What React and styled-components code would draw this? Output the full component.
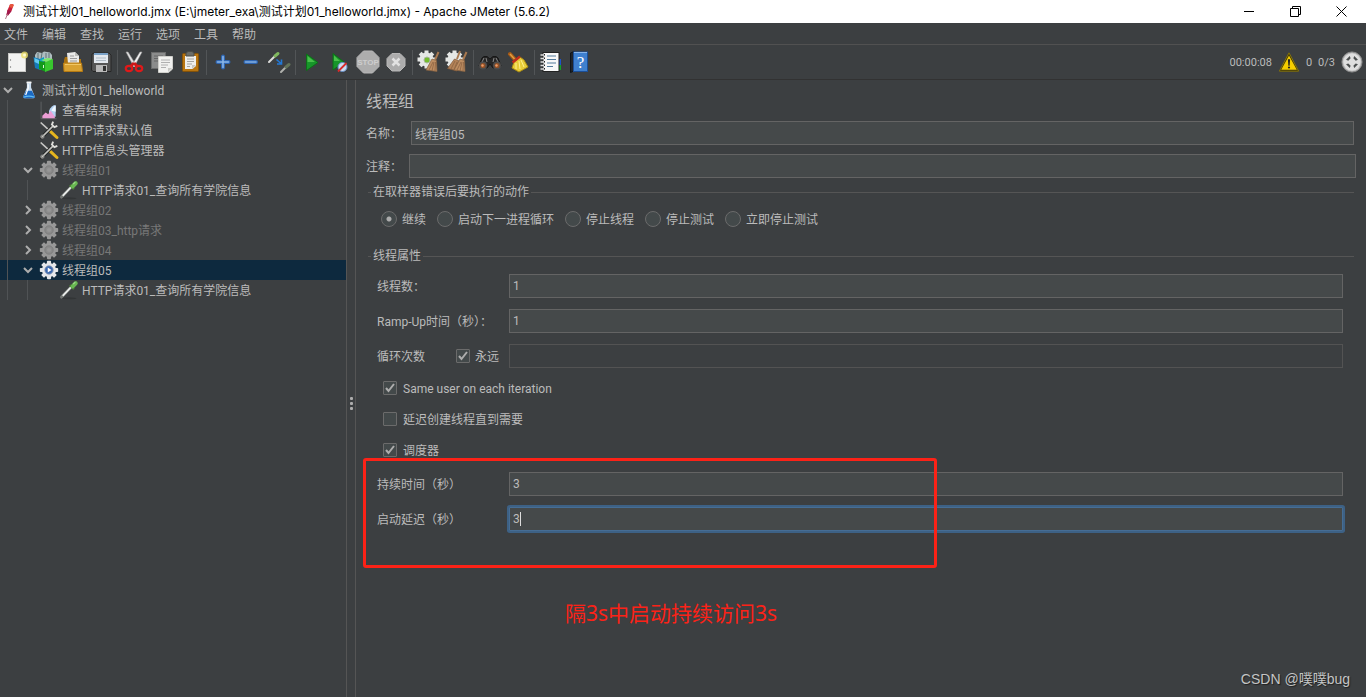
import React, { useState } from 'react';
import styled, { createGlobalStyle, css } from 'styled-components';

const GlobalStyle = createGlobalStyle`
  * {
    box-sizing: border-box;
  }

  body {
    margin: 0;
    background: #3c3f41;
    color: #bbbbbb;
    font-family: Roboto, 'Noto Sans CJK SC', sans-serif;
    font-size: 12px;
    line-height: 16px;
  }

  button, input {
    font: inherit;
    color: inherit;
  }
`;

// Window frame
const Window = styled.div`
  display: flex;
  flex-direction: column;
  min-height: 100vh;
`;

const TitleBar = styled.header`
  display: flex;
  align-items: center;
  height: 23px;
  padding: 0 2px;
  background: #ffffff;
  color: #000000;
`;

const WindowTitle = styled.h1`
  flex: 1;
  margin: 0 0 0 5px;
  font-family: Inter, 'Noto Sans CJK SC', sans-serif;
  font-size: 12px;
  font-weight: 400;
  white-space: nowrap;
`;

const WindowButton = styled.button`
  display: flex;
  align-items: center;
  justify-content: center;
  width: 46px;
  height: 21px;
  padding: 0;
  border: 0;
  background: none;
`;

const MenuBar = styled.nav`
  display: flex;
  gap: 14px;
  height: 22px;
  padding: 4px 4px 0;
  border-bottom: 1px solid #515151;
`;

const MenuButton = styled.button`
  height: 16px;
  padding: 0;
  border: 0;
  background: none;
`;

const ToolBar = styled.div`
  display: flex;
  align-items: center;
  height: 35px;
  padding: 0 3px;
  border-bottom: 1px solid #323232;
`;

const ToolButton = styled.button`
  display: flex;
  align-items: center;
  justify-content: center;
  width: 28px;
  height: 28px;
  padding: 0;
  border: 0;
  background: none;
`;

const Separator = styled.span`
  width: 1px;
  height: 25px;
  margin: 0 2px;
  background: #525557;
`;

const Status = styled.div`
  display: flex;
  align-items: center;
  gap: 6px;
  margin-left: auto;
  font-size: 11px;
`;

const Body = styled.div`
  display: flex;
  flex: 1;
`;

// Text sits slightly low beside its icon or box
const Text = styled.span`
  padding-top: 2px;
`;

// Tree
const Tree = styled.ul`
  flex: none;
  width: 346px;
  margin: 0;
  padding: 0;
  list-style: none;
`;

const TreeRow = styled.li`
  display: flex;
  align-items: center;
  height: 20px;
  white-space: nowrap;
  color: ${props => (props.$disabled ? '#777777' : '#bbbbbb')};
  background: ${props => (props.$selected ? '#0d293e' : 'transparent')};
`;

const Guide = styled.span`
  flex: none;
  align-self: stretch;
  width: 13px;
  margin-left: 7px;
  border-left: 1px solid #505355;
`;

const Toggle = styled.button`
  display: flex;
  align-items: center;
  justify-content: center;
  width: 16px;
  height: 20px;
  padding: 0;
  border: 0;
  background: none;
`;

const ToggleSpace = styled.span`
  width: 16px;
`;

const NodeIcon = styled.span`
  display: flex;
  margin: 0 3px;
`;

const Splitter = styled.div`
  display: flex;
  flex: none;
  flex-direction: column;
  align-items: center;
  justify-content: center;
  gap: 2px;
  width: 10px;
  padding-top: 30px;
  border-left: 1px solid #555555;
  border-right: 1px solid #555555;
`;

const Dot = styled.span`
  width: 3px;
  height: 3px;
  border-radius: 1px;
  background: #adadad;
`;

// Thread group form
const Panel = styled.main`
  position: relative;
  flex: 1;
  padding: 10px 10px 0;
`;

const PanelTitle = styled.h2`
  margin: 0 0 7px;
  font-size: 16px;
  font-weight: 400;
  line-height: 24px;
`;

const Label = styled.label`
  padding-top: 2px;
`;

const FieldRow = styled.div`
  display: flex;
  align-items: center;
  gap: 7px;
  margin-bottom: 9px;
`;

const Input = styled.input`
  flex: 1;
  min-width: 0;
  width: 100%;
  height: 24px;
  margin: 0 ${props => (props.$inset ? '2px' : '0')};
  padding: 0 3px;
  border: 1px solid #646464;
  border-radius: 0;
  outline: none;
  background: #45494a;

  &:disabled {
    border-color: #535353;
    background: #3c3f41;
  }

  ${props => props.$active && css`
    border-color: #466d94;
    box-shadow: 0 0 0 2px #3d6185;
    border-radius: 1px;
  `}
`;

const Group = styled.fieldset`
  min-width: 0;
  margin: ${props => (props.$first ? '-3px' : '20px')} 2px 0;
  padding: 0 11px 0 3px;
  border: 0;
  border-top: 1px solid #555555;
`;

const Legend = styled.legend`
  padding: 0 2px;
`;

const Radios = styled.div`
  display: flex;
  flex-wrap: wrap;
  gap: 11px;
  padding: 10px 0 0 10px;
`;

const ChoiceLabel = styled.label`
  display: flex;
  align-items: center;
  gap: ${props => (props.$wide ? '6px' : '5px')};
`;

const Radio = styled.input`
  appearance: none;
  width: 16px;
  height: 16px;
  margin: 0;
  border: 1px solid #6b6b6b;
  border-radius: 50%;
  background: #43494a;

  &:checked {
    background: radial-gradient(circle, #adadad 0 2px, #43494a 3px);
  }
`;

const CheckWrap = styled.span`
  display: grid;
`;

const CheckInput = styled.input`
  grid-area: 1 / 1;
  appearance: none;
  width: 14px;
  height: 14px;
  margin: 0;
  border: 1px solid #6b6b6b;
  border-radius: 1px;
  background: #43494a;
`;

const CheckMark = styled.svg`
  grid-area: 1 / 1;
  pointer-events: none;
`;

const Properties = styled.div`
  display: flex;
  flex-direction: column;
  gap: 11px;
  padding: 10px 0 0 6px;
`;

const PropertyRow = styled.div`
  display: flex;
  align-items: center;
`;

const LabelCell = styled.div`
  display: flex;
  flex: none;
  align-items: center;
  justify-content: space-between;
  width: 132px;
  padding-right: 10px;
  white-space: nowrap;
`;

const CheckRow = styled.div`
  display: flex;
  height: 20px;
  padding: 0 0 2px 6px;
`;

const InputWrap = styled.div`
  position: relative;
  display: flex;
  flex: 1;
`;

const Caret = styled.span`
  position: absolute;
  top: 5px;
  left: 11px;
  width: 1px;
  height: 14px;
  background: #dddddd;
`;

// Marks lying over the form
const RedFrame = styled.div`
  position: absolute;
  top: 378px;
  left: 7px;
  width: 574px;
  height: 110px;
  border: 3px solid #fc2217;
  border-radius: 3px;
  pointer-events: none;
`;

const RedNote = styled.p`
  position: absolute;
  top: 518px;
  left: 209px;
  margin: 0;
  color: #fc2217;
  font-family: 'Noto Sans', 'Noto Sans CJK SC', sans-serif;
  font-size: 21px;
  line-height: 30px;
  white-space: nowrap;
`;

const Watermark = styled.div`
  position: absolute;
  right: 16px;
  bottom: 8px;
  color: #c4c5c5;
  font-family: 'Liberation Sans', 'Noto Sans CJK SC', sans-serif;
  font-size: 14px;
  line-height: 20px;
  text-shadow: 1px 1px 1px #202020;
`;

// Icons
const Svg = ({ size = 24, children }) => (
  <svg width={size} height={size} viewBox="0 0 24 24" fill="none" aria-hidden="true">
    {children}
  </svg>
);

const FeatherIcon = () => (
  <svg width="16" height="18" viewBox="0 0 16 18" fill="none" aria-hidden="true">
    <path d="M8 1.500C10 .500 12 .800 11.500 2.500L9.500 8L6 12.500L4.500 12L5.500 7Z" fill="#c8203c" />
    <path d="M8 1.500C10 .500 12 .800 11.500 2.500L10.500 5L7 4Z" fill="#e8573b" />
    <path d="M5.500 7L9.500 8L6 12.500L4.500 12Z" fill="#a11a4f" />
    <path d="M5.500 11L3.500 16" stroke="#b0788c" />
  </svg>
);

const NewIcon = () => (
  <Svg>
    <rect x="3.500" y="3.500" width="17" height="18" fill="#f3f3f2" stroke="#c9c9c6" />
    <circle cx="5.500" cy="10" r=".7" fill="#777" />
    <circle cx="5.500" cy="17" r=".7" fill="#777" />
    <circle cx="19.500" cy="5" r="3.500" fill="#eee06a" opacity=".8" />
    <circle cx="19.500" cy="5" r="1.500" fill="#fffbd0" />
  </Svg>
);

const TemplatesIcon = () => (
  <Svg>
    <path d="M2 5L4 2L9 3L11 1.500L17 2.500L19 5V9H2Z" fill="#aebcc0" />
    <path d="M5 3V9M9 3L8 9M13 3V8M16 3V8" stroke="#5e7277" />
    <path d="M.5 7L7 9V20L2 18Z" fill="#1579b7" />
    <path d="M1.500 8L6 10V14L1.500 12Z" fill="#62c9ee" />
    <path d="M7 9L11 7V20L7 20Z" fill="#0d9dc6" />
    <path d="M6 11L13 12V22L6 19Z" fill="#129a1a" />
    <path d="M12 12L20 9V19L12 22Z" fill="#38c72e" />
    <path d="M8 10L15 8L20 9L13 12Z" fill="#7be96b" />
    <path d="M10.500 15V18" stroke="#d9f5d2" />
  </Svg>
);

const OpenIcon = () => (
  <Svg>
    <path d="M3 10L4 7H9L10 9H20V15H3Z" fill="#a9700e" />
    <path d="M6 3L14 2L18 6V14H7Z" fill="#e9e9e7" />
    <path d="M14 2V6H18" fill="#bdbdb9" />
    <path d="M9 6H13M9 8.500H16M9 11H16" stroke="#999" />
    <path d="M2.500 13H20.500L21.500 21.500H3Z" fill="#d9a232" stroke="#b67a12" />
    <path d="M4 14.500H20" stroke="#f1c765" />
  </Svg>
);

const SaveIcon = () => (
  <Svg>
    <path d="M3 4L5 3H20L22 5V21.500H4L2.500 20Z" fill="#565656" stroke="#262626" />
    <rect x="5" y="3" width="14" height="10" fill="#e3e8ee" />
    <path d="M5 4H19" stroke="#7aa2c8" strokeWidth="2" />
    <path d="M7 8H17M7 10.500H17" stroke="#b0bbc5" />
    <rect x="7" y="15" width="11" height="7" fill="#b9b9b9" />
    <rect x="14" y="16" width="3" height="5" fill="#303030" />
  </Svg>
);

const CutIcon = () => (
  <Svg>
    <path d="M4 2L6 2L14 15L12 17Z" fill="#e3e3e3" stroke="#a0a0a0" strokeWidth=".6" />
    <path d="M20 2L18 2L10 15L12 17Z" fill="#f4f4f4" stroke="#a0a0a0" strokeWidth=".6" />
    <path d="M12 13L9 16M12 13L15 16" stroke="#cc1717" strokeWidth="3" />
    <ellipse cx="7" cy="18.500" rx="3.200" ry="2.600" stroke="#e01919" strokeWidth="2.200" />
    <ellipse cx="17" cy="18.500" rx="3.200" ry="2.600" stroke="#e01919" strokeWidth="2.200" />
  </Svg>
);

const CopyIcon = () => (
  <Svg>
    <rect x="1.500" y="2.500" width="14" height="16" fill="#8b8c8c" stroke="#6b6c6c" />
    <path d="M4 6H13M4 8.500H8M4 11H8" stroke="#666" />
    <path d="M8.500 6.500H22.500V19L18.500 22.500H8.500Z" fill="#f1f1ef" stroke="#d0d0cc" />
    <path d="M11 10H20M11 12.500H20M11 15H18M11 17.500H16" stroke="#b0b0b0" />
    <path d="M22 18H18V22Z" fill="#c8c8c4" />
  </Svg>
);

const PasteIcon = () => (
  <Svg>
    <rect x="4.500" y="3.500" width="16" height="18" rx="1" fill="#b87510" stroke="#83520a" />
    <path d="M7 6H18V16L14.500 19H7Z" fill="#eeeeec" />
    <path d="M9 9H16M9 11.500H16M9 14H14M9 16.500H12" stroke="#a4a4a0" />
    <path d="M8 3L10 1.500H14L16 3V6H8Z" fill="#6b6d69" stroke="#4a4c48" />
    <path d="M18 15H14V19Z" fill="#c7c7c3" />
  </Svg>
);

const PlusIcon = () => (
  <Svg>
    <path d="M12 6.500V17.500M6.500 12H17.500" stroke="#2f65b0" strokeWidth="4" strokeLinecap="round" />
    <path d="M12 6.500V17.500M6.500 12H17.500" stroke="#8ab6e8" strokeWidth="1.600" strokeLinecap="round" />
  </Svg>
);

const MinusIcon = () => (
  <Svg>
    <path d="M6.500 12H17" stroke="#2f65b0" strokeWidth="4" strokeLinecap="round" />
    <path d="M6.500 12H17" stroke="#82afe2" strokeWidth="1.600" strokeLinecap="round" />
  </Svg>
);

const ToggleIcon = () => (
  <Svg>
    <path d="M2 12L8 6" stroke="#dcdcda" strokeWidth="2" strokeLinecap="round" />
    <path d="M8 6L11 3.500" stroke="#80b85f" strokeWidth="3" strokeLinecap="round" />
    <path d="M9.500 9.500L14 13.500M14.500 9.500V14H10" stroke="#2378d4" strokeWidth="1.600" />
    <path d="M14 22L18.500 17.500" stroke="#b0b2ad" strokeWidth="2" strokeLinecap="round" />
    <path d="M19 17L22 14.500" stroke="#63745a" strokeWidth="3" strokeLinecap="round" />
  </Svg>
);

const StartIcon = () => (
  <Svg>
    <path d="M6.500 4V20.500L18 12.500Z" fill="#17952a" stroke="#0d6e17" />
    <path d="M7.500 6V12H15Z" fill="#49c04a" />
  </Svg>
);

const StartNoPauseIcon = () => (
  <Svg>
    <path d="M5 3.500V20L16 12Z" fill="#17952a" stroke="#0d6e17" />
    <path d="M6 5.500V11H12Z" fill="#49c04a" />
    <circle cx="14.500" cy="17" r="4.500" fill="#cbdcf2" stroke="#678fc8" />
    <path d="M10 21.500L18.500 13" stroke="#d92b2b" strokeWidth="1.800" />
  </Svg>
);

const StopIcon = () => (
  <Svg>
    <path d="M7.500 1H16.500L23 7.500V16.500L16.500 23H7.500L1 16.500V7.500Z" fill="#adadad" stroke="#b8b8b8" />
    <text x="12" y="15" textAnchor="middle" fontSize="8" fontWeight="700" fontFamily="Liberation Sans" fill="#cdcdcd">STOP</text>
  </Svg>
);

const ShutdownIcon = () => (
  <Svg>
    <path d="M8 3.500H16L21 8.500V16L16 21H8L3 16V8.500Z" fill="#acacac" stroke="#b8b8b8" strokeLinejoin="round" />
    <path d="M8.500 8.500L15.500 15.500M15.500 8.500L8.500 15.500" stroke="#e2e2e2" strokeWidth="2.500" />
  </Svg>
);

const ClearIcon = ({ all }) => (
  <Svg>
    {[0, 45, 90, 135].map(a => (
      <rect key={a} x="7.500" y=".5" width="4" height="18" fill="#e5e7e5" transform={`rotate(${a} 9.500 9.500)`} />
    ))}
    <circle cx="9.500" cy="9.500" r="7" fill="#e5e7e5" />
    {!all && <circle cx="10" cy="10" r="3" fill="#74bd2d" stroke="#a9b79e" />}
    {all && (
      <>
        <path d="M15 1L12 9" stroke="#a87950" strokeWidth="2" />
        <path d="M9.500 9L13.500 10.500L12 21L2.500 18.500Z" fill="#b38358" stroke="#7d5536" strokeWidth=".7" />
        <path d="M10 11L6 19M12 12L9 20" stroke="#8b6241" strokeWidth=".8" />
      </>
    )}
    <path d="M21.500 2L18 10" stroke="#a87950" strokeWidth="2" />
    <path d="M15 9L19.500 10.500L20 21.500L9 20Z" fill="#bd8d61" stroke="#84603f" strokeWidth=".7" />
    <path d="M16 12L12 20M17 12L15 21M18.500 12L18 21" stroke="#8b6241" strokeWidth=".8" />
  </Svg>
);

const SearchIcon = () => (
  <Svg>
    <path d="M4 8L6 6.500H9L12 9L15 6.500H18L20 8L23 16L15 18L12 14L9 18L1 16Z" fill="#252525" stroke="#161616" />
    <path d="M6 8L4 12M8 8L9 12M18 8L20 12M16 8L15 12" stroke="#8b8b8b" />
    <circle cx="5" cy="15.500" r="3.300" fill="#925026" stroke="#4c4c4c" strokeWidth="1.500" />
    <circle cx="19" cy="15.500" r="3.300" fill="#925026" stroke="#4c4c4c" strokeWidth="1.500" />
    <circle cx="4.500" cy="15.500" r="1.200" fill="#ef9c68" />
    <circle cx="18.500" cy="15.500" r="1.200" fill="#ef9c68" />
  </Svg>
);

const BroomIcon = () => (
  <Svg>
    <path d="M4 4L8.500 9" stroke="#a75b17" strokeWidth="4" strokeLinecap="round" />
    <path d="M4 4L8.500 9" stroke="#e1a042" strokeWidth="1.500" />
    <path d="M8 12L14 7L18 10L22 17L13 22L6 18Z" fill="#e7cc38" stroke="#aa8b12" />
    <path d="M6.500 12.500L14 6.500" stroke="#be2d1d" strokeWidth="2.500" />
    <path d="M10 13L10 19M13 11L14 19M15 10L18 17" stroke="#fff08b" />
  </Svg>
);

const FunctionIcon = () => (
  <Svg>
    <rect x="19" y="9" width="3" height="6" fill="#1d55c9" />
    <rect x="19" y="15" width="3" height="5" fill="#13a128" />
    <rect x="4" y="2.500" width="16" height="19" fill="#f8f8f8" stroke="#222" />
    <path d="M8 6H17M8 9.500H17M8 13H17M8 16.500H14" stroke="#537a9a" strokeWidth="1.200" />
    <path d="M1.500 5H6M1.500 8.500H6M1.500 12H6M1.500 15.500H6M1.500 19H6" stroke="#ddd" strokeWidth="1.500" />
    <path d="M5.500 4V21" stroke="#222" strokeDasharray="1.500 2" />
  </Svg>
);

const HelpIcon = () => (
  <Svg>
    <path d="M3.500 3L7 1.500V21L3.500 22.500Z" fill="#20242a" stroke="#101418" />
    <rect x="6.500" y="2" width="14" height="19.500" fill="#3f80cf" stroke="#1c4f98" />
    <path d="M7 2.500H20" stroke="#88b4e9" />
    <text x="13.500" y="17.500" textAnchor="middle" fontSize="17" fontFamily="Liberation Serif" fill="#ffffff">?</text>
  </Svg>
);

const WarningIcon = () => (
  <Svg size={22}>
    <path d="M12 2L22.500 22H1.500Z" fill="#3a3208" stroke="#8d7907" strokeLinejoin="round" />
    <path d="M12 5L20.500 20.500H3.500Z" fill="#f5cd00" />
    <path d="M10.800 9H13.200L12.700 16H11.300Z" fill="#222" />
    <circle cx="12" cy="18" r="1.200" fill="#222" />
  </Svg>
);

const RemoteIcon = () => (
  <Svg size={22}>
    <circle cx="12" cy="12" r="11" fill="#b8b8b8" stroke="#8d8d8d" />
    <circle cx="12" cy="12" r="9.500" fill="#dedede" />
    {[0, 90, 180, 270].map(a => (
      <path key={a} d="M14.500 5.500L18.500 9.500L16 10.500L13.500 8Z" fill="#4b4e4e" transform={`rotate(${a} 12 12)`} />
    ))}
  </Svg>
);

const FlaskIcon = () => (
  <Svg size={20}>
    <path d="M9.500 2H14.500V9L19 20Q19 22 17 22H7Q5 22 5 20L9.500 9Z" fill="#c8dcef" />
    <path d="M8.500 13H15.500L19 20Q19 22 17 22H7Q5 22 5 20Z" fill="#1b6ac4" />
    <path d="M9 2H15V4H9Z" fill="#f5f5f5" />
    <path d="M11 5V10L8 18" stroke="#ffffff" strokeWidth="1.500" />
    <path d="M6 20.500Q12 18 18 20.500" stroke="#60bdf5" strokeWidth="1.500" />
  </Svg>
);

const ChartIcon = () => (
  <Svg size={20}>
    <path d="M2.500 2V22.500H21" stroke="#65686a" />
    <path d="M12 13Q15 6 20 6V20H12Z" fill="#b3d2f2" />
    <path d="M15 13Q17 8 20 7V14Z" fill="#eff8ff" />
    <path d="M4 19L8 15L11 17L14 13L19 20V22H4Z" fill="#ec9ed6" />
  </Svg>
);

const ToolsIcon = () => (
  <Svg size={20}>
    <path d="M2 3L13 13" stroke="#c8c8c6" strokeWidth="2" />
    <path d="M14 14L21.500 21" stroke="#e5b51e" strokeWidth="3.600" strokeLinecap="round" />
    <path d="M3 21L16 8" stroke="#242626" strokeWidth="4" strokeLinecap="round" />
    <path d="M3 21L17 7" stroke="#c4c4c0" strokeWidth="2" />
    <path d="M17 2L15.500 5.500L18.500 8.500L22 7" stroke="#dededa" strokeWidth="2.200" />
    <circle cx="4" cy="20" r="2" stroke="#a9aaa7" />
  </Svg>
);

const PipetteIcon = () => (
  <Svg size={20}>
    <ellipse cx="12" cy="22" rx="9" ry="1.200" fill="#323536" />
    <path d="M3 20.500L15 8" stroke="#747875" strokeWidth="3.500" strokeLinecap="round" />
    <path d="M4.500 19L15 8" stroke="#eceeec" strokeWidth="2" />
    <path d="M13 6L18 11" stroke="#467d32" strokeWidth="2.500" />
    <path d="M16.500 7.500L20 4" stroke="#69b852" strokeWidth="5" strokeLinecap="round" />
    <path d="M17 5L19.500 2.500" stroke="#a4d98f" strokeWidth="1.500" />
  </Svg>
);

const GearIcon = ({ active }) => (
  <Svg size={20}>
    {[0, 45, 90, 135].map(a => (
      <rect key={a} x="9.500" y="1" width="5" height="22" rx="1" fill={active ? '#e5e7ea' : '#989898'} transform={`rotate(${a} 12 12)`} />
    ))}
    <circle cx="12" cy="12" r="8.500" fill={active ? '#e5e7ea' : '#989898'} />
    <circle cx="12" cy="12" r="5" fill={active ? '#3866ae' : '#8b8b8b'} stroke={active ? '#8798b5' : '#7a7a7a'} />
    {active && <path d="M10.500 9V15L15 12Z" fill="#ffffff" />}
    {!active && <circle cx="12" cy="12" r="2.500" fill="#979797" />}
  </Svg>
);

const Chevron = ({ open }) => (
  <svg width="10" height="10" viewBox="0 0 10 10" fill="none" aria-hidden="true">
    <path d={open ? 'M1 3L5 7L9 3' : 'M3 1L7 5L3 9'} stroke="#adadad" strokeWidth="2" />
  </svg>
);

const menus = ['文件', '编辑', '查找', '运行', '选项', '工具', '帮助'];

const tools = [
  [['新建', NewIcon], ['模板', TemplatesIcon], ['打开', OpenIcon], ['保存', SaveIcon]],
  [['剪切', CutIcon], ['复制', CopyIcon], ['粘贴', PasteIcon]],
  [['展开', PlusIcon], ['折叠', MinusIcon], ['切换', ToggleIcon]],
  [['启动', StartIcon], ['不停顿启动', StartNoPauseIcon], ['停止', StopIcon], ['关闭', ShutdownIcon]],
  [['清除', ClearIcon], ['清除全部', () => <ClearIcon all />]],
  [['查找', SearchIcon], ['重置查找', BroomIcon]],
  [['函数助手', FunctionIcon], ['帮助', HelpIcon]],
];

const nodes = [
  { depth: 0, name: '测试计划01_helloworld', icon: <FlaskIcon />, open: true },
  { depth: 1, name: '查看结果树', icon: <ChartIcon /> },
  { depth: 1, name: 'HTTP请求默认值', icon: <ToolsIcon /> },
  { depth: 1, name: 'HTTP信息头管理器', icon: <ToolsIcon /> },
  { depth: 1, name: '线程组01', icon: <GearIcon />, open: true, disabled: true },
  { depth: 2, name: 'HTTP请求01_查询所有学院信息', icon: <PipetteIcon /> },
  { depth: 1, name: '线程组02', icon: <GearIcon />, open: false, disabled: true },
  { depth: 1, name: '线程组03_http请求', icon: <GearIcon />, open: false, disabled: true },
  { depth: 1, name: '线程组04', icon: <GearIcon />, open: false, disabled: true },
  { depth: 1, name: '线程组05', icon: <GearIcon active />, open: true, selected: true },
  { depth: 2, name: 'HTTP请求01_查询所有学院信息', icon: <PipetteIcon /> },
];

const errorActions = ['继续', '启动下一进程循环', '停止线程', '停止测试', '立即停止测试'];

const Check = ({ label, initial, wide }) => {
  const [checked, setChecked] = useState(initial);

  return (
    <ChoiceLabel $wide={wide}>
      <CheckWrap>
        <CheckInput type="checkbox" checked={checked} onChange={() => setChecked(!checked)} />
        {checked && (
          <CheckMark width="14" height="14" viewBox="0 0 14 14" fill="none">
            <path d="M3 7L5.500 10L11 3" stroke="#adadad" strokeWidth="2" />
          </CheckMark>
        )}
      </CheckWrap>
      <Text>{label}</Text>
    </ChoiceLabel>
  );
};

const Property = ({ id, label, value, active }) => (
  <PropertyRow>
    <LabelCell>
      <Label htmlFor={id}>{label}</Label>
    </LabelCell>
    <InputWrap>
      <Input id={id} defaultValue={value} $active={active} />
      {active && <Caret />}
    </InputWrap>
  </PropertyRow>
);

const App = () => {
  const [action, setAction] = useState('继续');

  return (
    <>
      <GlobalStyle />
      <Window>
        <TitleBar>
          <FeatherIcon />
          <WindowTitle>测试计划01_helloworld.jmx (E:\jmeter_exa\测试计划01_helloworld.jmx) - Apache JMeter (5.6.2)</WindowTitle>
          <WindowButton aria-label="最小化">
            <svg width="11" height="11" viewBox="0 0 11 11"><path d="M0 5.500H10" stroke="#000" /></svg>
          </WindowButton>
          <WindowButton aria-label="还原">
            <svg width="11" height="11" viewBox="0 0 11 11" fill="none" stroke="#000">
              <path d="M.5 2.500H8.500V10.500H.5Z" />
              <path d="M2.500 2.500V.5H10.500V8.500H8.500" />
            </svg>
          </WindowButton>
          <WindowButton aria-label="关闭窗口">
            <svg width="11" height="11" viewBox="0 0 11 11"><path d="M.5 .5L10.500 10.500M10.500 .5L.5 10.500" stroke="#000" /></svg>
          </WindowButton>
        </TitleBar>

        <MenuBar>
          {menus.map(menu => <MenuButton key={menu}>{menu}</MenuButton>)}
        </MenuBar>

        <ToolBar>
          {tools.map((group, i) => (
            <React.Fragment key={i}>
              {i > 0 && <Separator />}
              {group.map(([label, Icon]) => (
                <ToolButton key={label} aria-label={label}><Icon /></ToolButton>
              ))}
            </React.Fragment>
          ))}
          <Status>
            <Text>00:00:08</Text>
            <WarningIcon />
            <Text>0</Text>
            <Text>0/3</Text>
            <RemoteIcon />
          </Status>
        </ToolBar>

        <Body>
          <Tree>
            {nodes.map((node, i) => (
              <TreeRow key={i} $disabled={node.disabled} $selected={node.selected}>
                {Array.from({ length: node.depth }, (_, d) => <Guide key={d} />)}
                {node.open === undefined
                  ? <ToggleSpace />
                  : <Toggle aria-label={node.name} aria-expanded={node.open}><Chevron open={node.open} /></Toggle>}
                <NodeIcon>{node.icon}</NodeIcon>
                <Text>{node.name}</Text>
              </TreeRow>
            ))}
          </Tree>

          <Splitter>
            <Dot />
            <Dot />
            <Dot />
          </Splitter>

          <Panel>
            <PanelTitle>线程组</PanelTitle>
            <FieldRow>
              <Label htmlFor="name">名称：</Label>
              <Input id="name" defaultValue="线程组05" $inset />
            </FieldRow>
            <FieldRow>
              <Label htmlFor="comment">注释：</Label>
              <Input id="comment" />
            </FieldRow>

            <Group $first>
              <Legend>在取样器错误后要执行的动作</Legend>
              <Radios>
                {errorActions.map(item => (
                  <ChoiceLabel key={item}>
                    <Radio type="radio" name="action" checked={action === item} onChange={() => setAction(item)} />
                    <Text>{item}</Text>
                  </ChoiceLabel>
                ))}
              </Radios>
            </Group>

            <Group>
              <Legend>线程属性</Legend>
              <Properties>
                <Property id="threads" label="线程数：" value="1" />
                <Property id="ramp" label="Ramp-Up时间（秒）：" value="1" />
                <PropertyRow>
                  <LabelCell>
                    <Label htmlFor="loops">循环次数</Label>
                    <Check label="永远" initial />
                  </LabelCell>
                  <Input id="loops" disabled />
                </PropertyRow>
                <CheckRow><Check label="Same user on each iteration" initial wide /></CheckRow>
                <CheckRow><Check label="延迟创建线程直到需要" initial={false} wide /></CheckRow>
                <CheckRow><Check label="调度器" initial wide /></CheckRow>
                <Property id="duration" label="持续时间（秒）" value="3" />
                <Property id="delay" label="启动延迟（秒）" value="3" active />
              </Properties>
            </Group>

            <RedFrame />
            <RedNote>隔3s中启动持续访问3s</RedNote>
            <Watermark>CSDN @噗噗bug</Watermark>
          </Panel>
        </Body>
      </Window>
    </>
  );
};

export default App;
